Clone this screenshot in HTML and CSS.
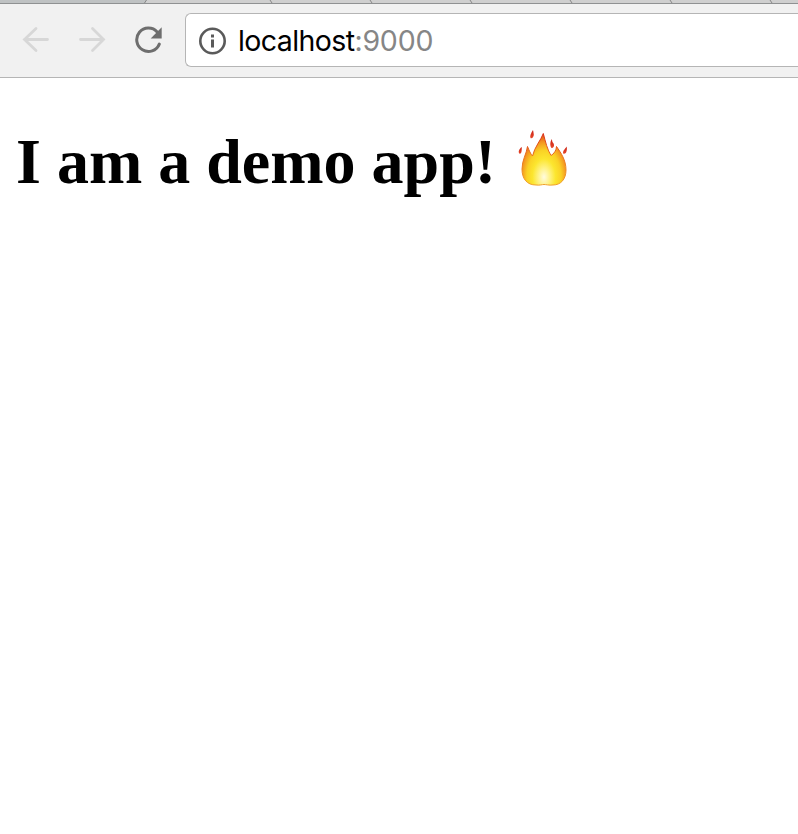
FILE: index.html
```html
<!DOCTYPE html>
<html lang="en">
<head>
<meta charset="utf-8">
<title>localhost:9000</title>
<link rel="stylesheet" href="styles.css">
</head>
<body>
<header>
  <svg class="tabs" viewBox="0 0 798 4" aria-hidden="true">
    <path d="M0 0H147L145 3H0z" fill="#bfc2c3"/>
    <path d="M146.500 0L144.500 3M270 0l2 3M370 0l2 3M470 0l2 3M570 0l2 3M670 0l2 3M770 0l2 3" stroke="#888" fill="none"/>
    <path d="M0 3.500H798" stroke="#8f9192"/>
  </svg>
  <div class="toolbar">
    <nav class="buttons">
      <svg class="arrow" viewBox="0 0 28 28"><path d="M25.500 13.500H2.500M14 2.500L2.500 13.500 14 24.500"/></svg>
      <svg class="arrow" viewBox="0 0 28 28"><path d="M2.500 13.500H25.500M14.500 2.500L25.500 13.500 14.500 24.500"/></svg>
      <svg class="reload" viewBox="-.7 -.5 28 28"><path d="M22.500 5.500A11.700 11.700 0 1 0 24.600 17.600" fill="none" stroke="#6e6e6e" stroke-width="3" stroke-linecap="round"/><path d="M27 .8V12H16z" fill="#6e6e6e"/></svg>
    </nav>
    <div class="address">
      <svg class="info" viewBox="-.5 0 28 28"><circle cx="14" cy="14" r="12.200" fill="none" stroke="#5a5a5a" stroke-width="2.600"/><path d="M12.500 7.500h3v3h-3zM12.500 12.500h3v8h-3z" fill="#5a5a5a"/></svg>
      <span class="url"><span class="host">localhost</span><span class="port">:9000</span></span>
    </div>
  </div>
</header>
<main>
  <h1>I am a demo app!
    <svg class="fire" viewBox="0 0 75 75" role="img" aria-label="fire">
      <defs>
        <radialGradient id="flame" gradientUnits="userSpaceOnUse" cx="39" cy="57" r="43" gradientTransform="matrix(.64 0 0 1 14.040 0)">
          <stop offset="0" stop-color="#fffbe0"/><stop offset=".2" stop-color="#fff38a"/><stop offset=".42" stop-color="#fce62f"/><stop offset=".62" stop-color="#fad225"/><stop offset=".8" stop-color="#f49a20"/><stop offset="1" stop-color="#e14a1b"/>
        </radialGradient>
        <linearGradient id="edge" x1="0" y1="0" x2="0" y2="1">
          <stop offset="0" stop-color="#d92b16"/><stop offset=".45" stop-color="#e9751d"/><stop offset="1" stop-color="#f0a02a"/>
        </linearGradient>
        <linearGradient id="drop" x1="0" y1="0" x2="0" y2="1">
          <stop offset="0" stop-color="#c91f14"/><stop offset="1" stop-color="#e8492a"/>
        </linearGradient>
      </defs>
      <path d="M38.300 13.500C36 20 29.500 27 27.500 36C25.500 34 24 30 22.500 26.500C21.500 34 17 40 17 49C17 59 22 65 31 65C35 65.500 37 64.500 39 64.500C41 64.500 44 65.500 48 65C56 65 61 59 61 50C61 40 56 33 51.500 26.500C51.500 30 49 34 46 35.500C42.500 30 40.500 22 38.300 13.500Z" fill="url(#flame)" stroke="url(#edge)" stroke-width="1"/>
      <g fill="url(#drop)">
        <path d="M28 10C26 13 24.500 16 25.500 18C27 19 29 16.500 28.800 14.500Q28.500 12 28 10Z"/>
        <path d="M46.800 19C44.800 22 44.800 26 46.500 28C49 28 49.500 25.500 48.600 23.500Q47 22 46.800 19Z"/>
        <path d="M16.700 27C14 29 13 32 14.300 33.500C16 34.500 17 32 16.700 27Z"/>
        <path d="M61.700 26.500C60 29 57.500 31 58.200 33.500C60.500 34.500 62.500 32 61.700 26.500Z"/>
      </g>
    </svg>
  </h1>
</main>
</body>
</html>
```

FILE: styles.css
```css
body {
  margin: 0;
  background: #fff;
  overflow: hidden;
}

header {
  background: #f1f1f1;
  border-bottom: 1px solid #b5b5b5;
}

.tabs {
  display: block;
  width: 798px;
  height: 4px;
  background: #cfcfcf;
}

.toolbar {
  display: flex;
  height: 73px;
  padding-left: 22px;
  box-sizing: border-box;
}

.buttons {
  display: flex;
  gap: 28px;
  width: 163px;
  padding-top: 22px;
  box-sizing: border-box;
}

.buttons svg,
.info {
  display: block;
  width: 28px;
  height: 28px;
  flex: none;
}

.arrow {
  fill: none;
  stroke: #d7d7d7;
  stroke-width: 2.8;
  stroke-linecap: round;
}

.address {
  display: flex;
  flex: 1;
  align-items: center;
  gap: 12px;
  height: 54px;
  margin-top: 9px;
  padding: 1px 0 0 12px;
  box-sizing: border-box;
  background: #fff;
  border: 1px solid #b5b5b5;
  border-right: 0;
  border-radius: 6px 0 0 6px;
}

.url {
  padding-top: 1px;
  font: 28.5px/36px Inter, sans-serif;
  white-space: nowrap;
}

.host {
  color: #000;
  letter-spacing: -0.6px;
}

.port {
  color: #868686;
  letter-spacing: -0.2px;
}

h1 {
  display: flex;
  align-items: flex-start;
  margin: 47px 0 0 16px;
  font: bold 64px/74px "Liberation Serif", serif;
  color: #000;
  white-space: nowrap;
}

.fire {
  width: 75px;
  height: 75px;
  margin: -5px 0 0 8.6px;
}
```
